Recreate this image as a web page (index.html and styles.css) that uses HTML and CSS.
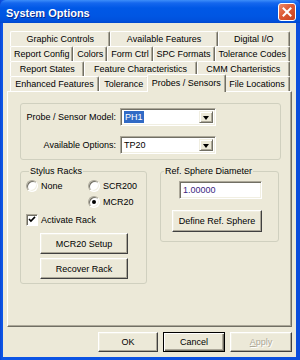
FILE: index.html
```html
<!DOCTYPE html>
<html>
<head>
<meta charset="utf-8">
<link rel="stylesheet" href="styles.css">
</head>
<body>
<div class="window">
  <div class="titlebar">
    <span class="title">System Options</span>
    <span class="close"><svg viewBox="0 0 16 16" width="16" height="16"><path d="M4.5 4.5 L11.5 11.5 M11.5 4.5 L4.5 11.5" stroke="#fff" stroke-width="2" stroke-linecap="square"/></svg></span>
  </div>
  <div class="client">
    <div class="tabs">
      <div class="tabrow">
        <span class="tab">Graphic Controls</span>
        <span class="tab">Available Features</span>
        <span class="tab">Digital I/O</span>
      </div>
      <div class="tabrow">
        <span class="tab">Report Config</span>
        <span class="tab">Colors</span>
        <span class="tab">Form Ctrl</span>
        <span class="tab">SPC Formats</span>
        <span class="tab">Tolerance Codes</span>
      </div>
      <div class="tabrow">
        <span class="tab">Report States</span>
        <span class="tab">Feature Characteristics</span>
        <span class="tab">CMM Charteristics</span>
      </div>
      <div class="tabrow">
        <span class="tab">Enhanced Features</span>
        <span class="tab">Tolerance</span>
        <span class="tab active">Probes / Sensors</span>
        <span class="tab">File Locations</span>
      </div>
    </div>
    <div class="panel">
      <div class="group probe">
        <span class="lbl">Probe / Sensor Model:</span>
        <div class="combo"><span class="val"><span class="hl">PH1</span></span><span class="drop"><span class="arrow"></span></span></div>
        <span class="lbl">Available Options:</span>
        <div class="combo"><span class="val">TP20</span><span class="drop"><span class="arrow"></span></span></div>
      </div>
      <div class="lower">
        <fieldset class="group racks">
          <legend>Stylus Racks</legend>
          <div class="radios">
            <span class="opt"><span class="radio"></span>None</span>
            <span class="opt"><span class="radio"></span>SCR200</span>
            <span class="opt col2"><span class="radio on"></span>MCR20</span>
          </div>
          <span class="opt check-row"><span class="check"><svg viewBox="0 0 11 11" width="11" height="11"><path d="M2.2 5 L4.3 7.2 L8.8 2.6" fill="none" stroke="#000" stroke-width="1.7"/></svg></span>Activate Rack</span>
          <span class="btn rack-btn">MCR20 Setup</span>
          <span class="btn rack-btn">Recover Rack</span>
        </fieldset>
        <fieldset class="group sphere">
          <legend>Ref. Sphere Diameter</legend>
          <span class="field">1.00000</span>
          <span class="btn define">Define Ref. Sphere</span>
        </fieldset>
      </div>
    </div>
    <div class="actions">
      <span class="btn ok">OK</span>
      <span class="btn cancel">Cancel</span>
      <span class="btn apply"><u>A</u>pply</span>
    </div>
  </div>
</div>
</body>
</html>
```

FILE: styles.css
```css
* { box-sizing: border-box; }
html, body { margin: 0; padding: 0; background: #fff; }
body {
  font-family: "Liberation Sans", Arial, sans-serif;
  font-size: 9px;
  color: #000;
}
.window {
  width: 300px;
  height: 360px;
  background: linear-gradient(to right, #0A45D2 0, #0C55E6 2px, #0B4EDC 100%);
  display: flex;
  flex-direction: column;
}
.titlebar {
  height: 23px;
  flex: none;
  display: flex;
  align-items: center;
  justify-content: space-between;
  padding: 1px 4px 0 6px;
  background: linear-gradient(to bottom, #3D8EF9 0, #1567EE 3px, #0058E6 8px, #0056E3 16px, #0050DC 21px, #0047CC 23px);
  border-radius: 6px 6px 0 0;
}
.title {
  color: #fff;
  font-weight: bold;
  font-size: 11px;
  text-shadow: 1px 1px 0 #0A2A8C;
  padding-top: 2px;
}
.close {
  width: 18px;
  height: 18px;
  border: 1px solid #fff;
  border-radius: 3px;
  background: linear-gradient(135deg, #EE8A6A 0%, #DD5A34 45%, #C8401D 100%);
  display: flex;
  align-items: center;
  justify-content: center;
}
.close svg { display: block; }
.client {
  flex: 1;
  margin: 0 4px 3px 3px;
  background: #ECE9D8;
  display: flex;
  flex-direction: column;
}
.tabs {
  margin: 8px 6px 0 7px;
}
.tabrow {
  display: flex;
  height: 15px;
}
.tab {
  flex: 1 1 auto;
  white-space: nowrap;
  text-align: center;
  line-height: 13px;
  padding: 1px 0 0;
  border-top: 1px solid #fff;
  border-left: 1px solid #fff;
  border-right: 1px solid #716F64;
  box-shadow: inset -1px 0 #ACA899;
  border-radius: 2px 2px 0 0;
  background: #EEEBDD;
}
.tab.active {
  position: relative;
  z-index: 2;
  margin: -2px -2px -1px;
  padding-top: 2px;
  background: #ECE9D8;
  box-shadow: inset -1px 0 #ACA899;
}
.panel {
  margin: 0 4px;
  height: 236px;
  flex: none;
  border: 1px solid;
  border-color: #fff #716F64 #716F64 #fff;
  box-shadow: inset -1px -1px #ACA899;
  padding: 11px 10px 0 12px;
  background: #ECE9D8;
}
.group {
  border: 1px solid #D0D0BF;
  border-radius: 3px;
  margin: 0;
}
.probe {
  display: grid;
  grid-template-columns: 95px 96px;
  column-gap: 4px;
  row-gap: 10px;
  align-items: center;
  padding: 4px 0 5px 0;
}
.lbl {
  text-align: right;
  white-space: nowrap;
}
.combo {
  height: 18px;
  display: flex;
  background: #fff;
  border: 1px solid;
  border-color: #ACA899 #fff #fff #ACA899;
  box-shadow: inset 1px 1px #716F64, inset -1px -1px #F1EFE2;
  padding: 2px 2px 2px 2px;
}
.val {
  flex: 1;
  line-height: 12px;
  padding-left: 1px;
}
.hl {
  background: #316AC5;
  color: #fff;
  padding: 0 1px;
  display: inline-block;
  line-height: 12px;
}
.drop {
  width: 14px;
  flex: none;
  background: #ECE9D8;
  border: 1px solid;
  border-color: #F1EFE2 #716F64 #716F64 #F1EFE2;
  box-shadow: inset 1px 1px #fff, inset -1px -1px #ACA899;
  display: flex;
  align-items: center;
  justify-content: center;
}
.arrow {
  width: 0;
  height: 0;
  border-left: 3.5px solid transparent;
  border-right: 3.5px solid transparent;
  border-top: 4px solid #000;
  margin-top: 1px;
}
.lower {
  display: flex;
  gap: 13px;
  margin-top: 6px;
  align-items: flex-start;
}
legend {
  padding: 0 1px;
  margin-left: 3px;
  line-height: 11px;
  font-size: 9px;
}
.racks {
  width: 127px;
  padding: 0 0 4px 5px;
  display: flex;
  flex-direction: column;
}
.radios {
  display: grid;
  grid-template-columns: 62px auto;
  grid-auto-rows: 16px;
  margin-top: 1px;
}
.opt {
  display: flex;
  align-items: center;
  gap: 3px;
  white-space: nowrap;
}
.col2 { grid-column: 2; }
.radio {
  width: 12px;
  height: 12px;
  border-radius: 50%;
  background: #fff;
  border: 1px solid;
  border-color: #ACA899 #fff #fff #ACA899;
  box-shadow: inset 1px 1px #716F64, inset -1px -1px #F1EFE2;
  display: flex;
  align-items: center;
  justify-content: center;
  flex: none;
}
.radio.on::after {
  content: "";
  width: 4px;
  height: 4px;
  border-radius: 50%;
  background: #000;
}
.check-row { height: 17px; margin-top: 1px; }
.check {
  width: 12px;
  height: 12px;
  background: #fff;
  border: 1px solid;
  border-color: #ACA899 #fff #fff #ACA899;
  box-shadow: inset 1px 1px #716F64;
  flex: none;
  display: flex;
  align-items: center;
  justify-content: center;
}
.check svg { display: block; }
.btn {
  display: flex;
  align-items: center;
  justify-content: center;
  background: #ECE9D8;
  border: 1px solid;
  border-color: #fff #404040 #404040 #fff;
  box-shadow: inset -1px -1px #ACA899, inset 1px 1px #F1EFE2;
  white-space: nowrap;
}
.rack-btn {
  width: 88px;
  height: 21px;
  margin-left: 14px;
  margin-top: 5px;
}
.rack-btn + .rack-btn { margin-top: 4px; }
.sphere {
  width: 119px;
  padding: 0 16px 9px 0;
  display: flex;
  flex-direction: column;
  align-items: flex-end;
}
.field {
  width: 83px;
  height: 18px;
  margin-top: 4px;
  background: #fff;
  color: #3A2580;
  border: 1px solid;
  border-color: #ACA899 #fff #fff #ACA899;
  box-shadow: inset 1px 1px #716F64, inset -1px -1px #F1EFE2;
  padding: 3px 0 0 3px;
  line-height: 11px;
}
.define {
  width: 90px;
  height: 22px;
  margin-top: 11px;
}
.actions {
  display: flex;
  justify-content: flex-end;
  gap: 5px;
  padding: 5px 4px 0 0;
}
.actions .btn { height: 20px; width: 62px; }
.actions .ok { width: 60px; }
.cancel {
  outline: 1px solid #000;
  outline-offset: -1px;
  border-color: #000 #000 #000 #000;
  box-shadow: inset 1px 1px #fff, inset -1px -1px #716F64, inset -2px -2px #ACA899;
}
.apply {
  color: #ACA899;
  text-shadow: 1px 1px 0 #fff;
}
.apply u { text-decoration: underline; }
```
